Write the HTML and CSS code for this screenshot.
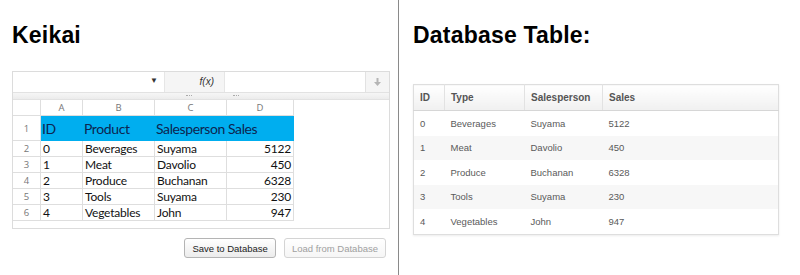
FILE: index.html
```html
<!DOCTYPE html>
<html lang="en">
<head>
    <meta charset="UTF-8">
    <title>Keikai Database</title>
    <link rel="stylesheet" href="styles.css">
</head>
<body>
    <div class="page">
        <div class="left-panel">
            <h1>Keikai</h1>

            <div class="sheet">
                <div class="formula-bar">
                    <div class="name-box"><span class="caret">&#9660;</span></div>
                    <div class="fx">f(x)</div>
                    <div class="formula-input"></div>
                    <div class="expand">
                        <svg width="7" height="8" viewBox="0 0 7 8"><path d="M2.5 0h2v4h2.5l-3.5 4-3.5-4h2.5z" fill="#b5b5b5"/></svg>
                    </div>
                </div>
                <div class="splitter">
                    <span class="grip grip-a"></span>
                    <span class="grip grip-b"></span>
                </div>

                <div class="grid">
                    <div class="corner"></div>
                    <div class="col-head">A</div>
                    <div class="col-head">B</div>
                    <div class="col-head">C</div>
                    <div class="col-head">D</div>

                    <div class="row-head">1</div>
                    <div class="cell hl">ID</div>
                    <div class="cell hl">Product</div>
                    <div class="cell hl">Salesperson</div>
                    <div class="cell hl">Sales</div>

                    <div class="row-head">2</div>
                    <div class="cell">0</div>
                    <div class="cell">Beverages</div>
                    <div class="cell">Suyama</div>
                    <div class="cell num">5122</div>

                    <div class="row-head">3</div>
                    <div class="cell">1</div>
                    <div class="cell">Meat</div>
                    <div class="cell">Davolio</div>
                    <div class="cell num">450</div>

                    <div class="row-head">4</div>
                    <div class="cell">2</div>
                    <div class="cell">Produce</div>
                    <div class="cell">Buchanan</div>
                    <div class="cell num">6328</div>

                    <div class="row-head">5</div>
                    <div class="cell">3</div>
                    <div class="cell">Tools</div>
                    <div class="cell">Suyama</div>
                    <div class="cell num">230</div>

                    <div class="row-head">6</div>
                    <div class="cell">4</div>
                    <div class="cell">Vegetables</div>
                    <div class="cell">John</div>
                    <div class="cell num">947</div>
                </div>
            </div>

            <div class="actions">
                <button class="btn">Save to Database</button>
                <button class="btn" disabled>Load from Database</button>
            </div>
        </div>

        <div class="divider"></div>

        <div class="right-panel">
            <h1>Database Table:</h1>
            <table class="db-table">
                <thead>
                    <tr>
                        <th class="c-id">ID</th>
                        <th class="c-type">Type</th>
                        <th class="c-person">Salesperson</th>
                        <th>Sales</th>
                    </tr>
                </thead>
                <tbody>
                    <tr><td>0</td><td>Beverages</td><td>Suyama</td><td>5122</td></tr>
                    <tr><td>1</td><td>Meat</td><td>Davolio</td><td>450</td></tr>
                    <tr><td>2</td><td>Produce</td><td>Buchanan</td><td>6328</td></tr>
                    <tr><td>3</td><td>Tools</td><td>Suyama</td><td>230</td></tr>
                    <tr><td>4</td><td>Vegetables</td><td>John</td><td>947</td></tr>
                </tbody>
            </table>
        </div>
    </div>
</body>
</html>
```

FILE: styles.css
```css
body {
    margin: 0;
    background: #fff;
    font-family: 'Liberation Sans', Arial, sans-serif;
    color: #000;
}

.page {
    display: flex;
    height: 275px;
}

h1 {
    margin: 0;
    font-size: 23px;
    font-weight: bold;
    line-height: 26px;
    letter-spacing: 0.2px;
}

/* left side: spreadsheet */

.left-panel {
    width: 398px;
    padding: 22px 0 0 12px;
    box-sizing: border-box;
}

.sheet {
    width: 378px;
    height: 158px;
    margin-top: 23px;
    border: 1px solid #dcdcdc;
    box-sizing: border-box;
}

.formula-bar {
    display: flex;
    height: 20px;
    border-bottom: 1px solid #e2e2e2;
}

.name-box {
    width: 151px;
    position: relative;
    border-right: 1px solid #e6e6e6;
}

.caret {
    position: absolute;
    right: 6px;
    top: 4px;
    font-size: 8px;
    color: #333;
}

.fx {
    width: 59px;
    background: #f5f5f5;
    font-style: italic;
    font-size: 10px;
    line-height: 20px;
    text-align: right;
    padding-right: 10px;
    box-sizing: border-box;
    color: #333;
}

.formula-input {
    flex: 1;
    border-left: 1px solid #e6e6e6;
}

.expand {
    width: 23px;
    background: #f5f5f5;
    border-left: 1px solid #e2e2e2;
    display: flex;
    align-items: center;
    justify-content: center;
}

.splitter {
    height: 6px;
    background: linear-gradient(#f6f6f6, #ececec);
    border-bottom: 1px solid #e2e2e2;
    position: relative;
}

.grip {
    position: absolute;
    top: 2px;
    width: 6px;
    border-top: 1px dotted #aaa;
}

.grip-a { left: 173px; }
.grip-b { left: 220px; }

.grid {
    display: grid;
    grid-template-columns: 28px 42px 72px 72px 67px;
    grid-template-rows: 16px 25px repeat(5, 16px);
    width: 281px;
    font-family: Lato, 'Open Sans', sans-serif;
}

.corner,
.col-head,
.row-head {
    color: #777;
    font-size: 9.5px;
    font-family: 'Open Sans', sans-serif;
    border-right: 1px solid #dedede;
    border-bottom: 1px solid #dedede;
    box-sizing: border-box;
    display: flex;
    align-items: center;
    justify-content: center;
}

.cell {
    font-size: 12px;
    letter-spacing: -0.2px;
    line-height: 15px;
    padding: 0 2px;
    border-right: 1px solid #dedede;
    border-bottom: 1px solid #dedede;
    box-sizing: border-box;
    display: flex;
    align-items: flex-end;
    white-space: nowrap;
    overflow: hidden;
    color: #111;
}

.cell.hl {
    background: #00aeef;
    border-color: #00aeef;
    color: #0d2550;
    font-size: 14px;
    letter-spacing: -0.4px;
    line-height: 22px;
    padding-left: 1px;
}

.cell.num {
    justify-content: flex-end;
}

.actions {
    display: flex;
    justify-content: flex-end;
    gap: 8px;
    width: 374px;
    margin-top: 9px;
}

.btn {
    height: 20px;
    padding: 0 7px;
    font-family: 'Liberation Sans', Arial, sans-serif;
    font-size: 9.5px;
    color: #222;
    background: linear-gradient(#ffffff, #ececec);
    border: 1px solid #b4b4b4;
    border-radius: 3px;
}

.btn:disabled {
    color: #a0a0a0;
    border-color: #d4d4d4;
    background: linear-gradient(#ffffff, #f6f6f6);
}

.divider {
    width: 1px;
    background: #8a8a8a;
}

/* right side: database table */

.right-panel {
    flex: 1;
    padding: 22px 0 0 14px;
}

.db-table {
    margin-top: 36px;
    width: 366px;
    border-collapse: collapse;
    border: 1px solid #dedede;
    box-shadow: 0 1px 2px rgba(0, 0, 0, 0.08);
    font-size: 9.5px;
    color: #5a5a5a;
}

.db-table th {
    height: 25px;
    text-align: left;
    padding: 0 6px;
    font-size: 10px;
    font-weight: bold;
    color: #555;
    background: linear-gradient(#ffffff, #f0f0f0);
    border-right: 1px solid #e2e2e2;
    border-bottom: 1px solid #d6d6d6;
}

.db-table th:last-child {
    border-right: none;
}

.db-table .c-id { width: 18px; }
.db-table .c-type { width: 67px; }
.db-table .c-person { width: 65px; }

.db-table td {
    height: 24.5px;
    padding: 0 6px;
}

.db-table tbody tr:nth-child(even) {
    background: #f7f7f7;
}
```
